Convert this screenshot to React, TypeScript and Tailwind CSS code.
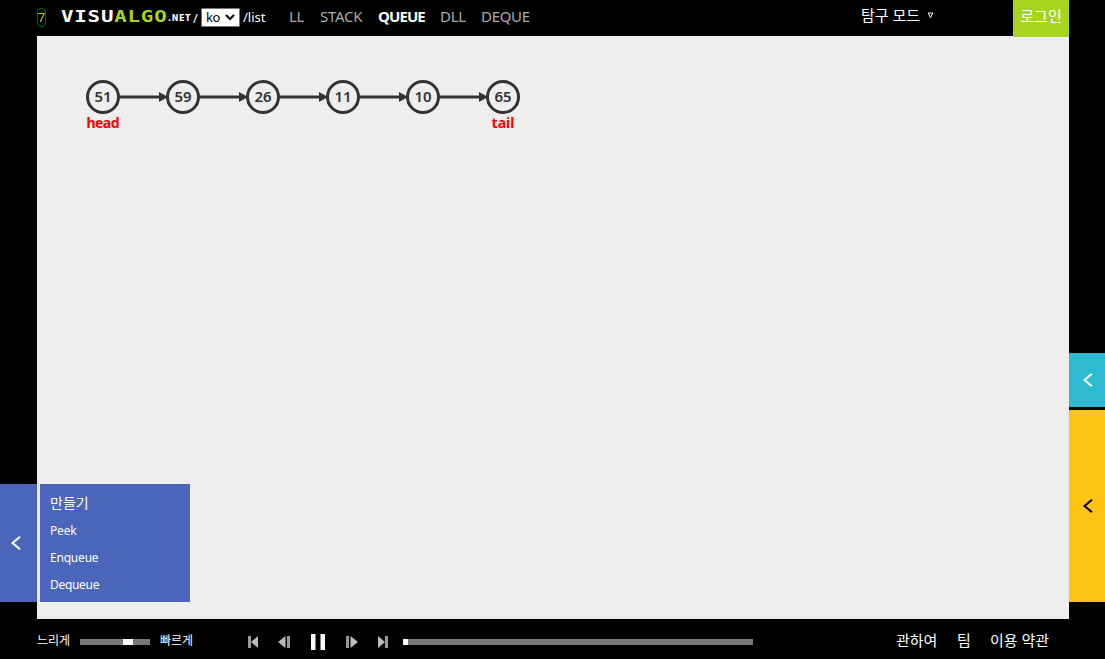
import React from "react";

const values = [51, 59, 26, 11, 10, 65];

const tabs = [
  { name: "LL", cls: "w-[31px] text-[#aaa] tracking-[-0.3px]" },
  { name: "STACK", cls: "w-[58px] text-[#aaa] tracking-[-0.25px]" },
  { name: "QUEUE", cls: "w-[62px] font-bold text-white tracking-[-0.9px]" },
  { name: "DLL", cls: "w-[41px] text-[#aaa] tracking-[-0.3px]" },
  { name: "DEQUE", cls: "w-[60px] text-[#aaa] tracking-[-0.3px]" },
];

function Chevron() {
  return (
    <svg width="10" height="14" viewBox="0 0 10 14" fill="none">
      <path d="M9 0.800 L1.500 7 L9 13.200" stroke="currentColor" strokeWidth="2" />
    </svg>
  );
}

function Header() {
  return (
    <header className="flex h-9 shrink-0 items-start bg-black pl-[37px] text-white">
      <span className="mt-2 flex h-[19px] w-[9px] items-center justify-center rounded-[4px] border border-[#007000] text-[13px] text-[#a7d41e]">
        7
      </span>
      <div className="ml-[15px] flex h-[33px] w-[107px] items-center whitespace-nowrap">
        <span className="origin-left scale-x-[1.3] font-['DejaVu_Sans_Mono'] text-[16px] font-bold tracking-[0.6px]">
          VISU<span className="text-[#a7d41e]">ALGO</span>
        </span>
      </div>
      <span className="mt-[11px] w-[25px] font-['DejaVu_Sans'] text-[8px] leading-[16px] font-bold tracking-[0.6px]">.NET</span>
      <span className="mt-[9px] w-[8px] text-[13px] leading-[18px]">/</span>
      <div className="mt-2 flex h-[19px] w-[39px] items-center rounded-[1px] border border-[#777] bg-white pl-1 text-[13px] text-black">
        <span className="w-[19px] tracking-[-0.4px]">ko</span>
        <svg width="10" height="7" viewBox="0 0 10 7" fill="none">
          <path d="M1 1 L5 5 L9 1" stroke="currentColor" strokeWidth="2" />
        </svg>
      </div>
      <span className="mt-2 ml-[3px] w-[45px] text-[13px] leading-[18px]">/list</span>
      <nav className="mt-[5px] ml-px flex text-[15px] leading-[22px]">
        {tabs.map((t) => (
          <span key={t.name} className={t.cls}>{t.name}</span>
        ))}
      </nav>
      <div className="mt-1 ml-auto flex w-[152px] items-center text-[15px] leading-[22px]">
        <span className="w-[66px] whitespace-nowrap">탐구 모드</span>
        <svg width="7" height="7" viewBox="0 0 7 7" fill="none">
          <path d="M1.200 1 H5.800 L3.500 5.600 Z" stroke="currentColor" />
        </svg>
      </div>
      <button className="relative z-10 mr-9 h-[37px] w-14 shrink-0 bg-[#a7d41e] pb-1 text-[15px] whitespace-nowrap">로그인</button>
    </header>
  );
}

function QueueDrawing() {
  return (
    <svg width="1032" height="120" className="block font-['Noto_Sans']">
      {values.slice(1).map((v, i) => (
        <g key={v}>
          <path d={`M${82 + i * 80} 61 H${122 + i * 80}`} stroke="#333" strokeWidth="3" />
          <path d={`M${122 + i * 80} 56 L${131 + i * 80} 61 L${122 + i * 80} 66 Z`} fill="#333" />
        </g>
      ))}
      {values.map((v, i) => (
        <g key={v}>
          <circle cx={66 + i * 80} cy="61" r="15.5" fill="#eee" stroke="#333" strokeWidth="3" />
          <text x={66 + i * 80} y="66" textAnchor="middle" fontSize="15" fontWeight="600" fill="#333">{v}</text>
        </g>
      ))}
      <g fill="red" fontSize="14" fontWeight="700" textAnchor="middle">
        <text x="66" y="92" textLength="33">head</text>
        <text x="466" y="92" textLength="23">tail</text>
      </g>
    </svg>
  );
}

function Footer() {
  return (
    <footer className="flex h-10 shrink-0 items-center bg-black pt-1.5 pr-[36px] pl-[37px] text-white">
      <span className="w-[43px] pb-0.5 text-[12px] whitespace-nowrap">느리게</span>
      <div className="flex h-1.5 w-[70px] bg-[#777] pl-[43px]">
        <div className="h-1.5 w-2.5 bg-white" />
      </div>
      <span className="ml-[10px] w-[87px] pb-0.5 text-[12px] whitespace-nowrap">빠르게</span>
      <svg width="144" height="18" viewBox="247 633 144 18" fill="#bbb">
        <path d="M248 636h3v12h-3z" fill="#999" />
        <path d="M258 636v12l-7-6z" />
        <path d="M285.500 636v12l-7.500-6z" />
        <path d="M287 636h3v12h-3z" fill="#999" />
        <path d="M311 634h4.500v16h-4.500z M320.500 634h4.500v16h-4.500z" fill="#fff" />
        <path d="M346 636h3v12h-3z" fill="#999" />
        <path d="M350.500 636v12l7.500-6z" />
        <path d="M378 636v12l7-6z" />
        <path d="M385 636h3v12h-3z" fill="#999" />
      </svg>
      <div className="ml-3 h-1.5 w-[350px] bg-[#777]">
        <div className="h-1.5 w-[5px] bg-white" />
      </div>
      <div className="ml-auto flex pb-1 text-[15px] whitespace-nowrap">
        <span className="w-[61px]">관하여</span>
        <span className="w-[33px]">팀</span>
        <span className="w-[79px]">이용 약관</span>
      </div>
    </footer>
  );
}

export default function App() {
  return (
    <div className="flex h-[659px] w-[1105px] flex-col overflow-hidden bg-black font-['Noto_Sans','Noto_Sans_CJK_KR',sans-serif]">
      <Header />
      <div className="flex h-[583px] shrink-0">
        <aside className="flex w-[37px] shrink-0 flex-col justify-end pb-[17px]">
          <button className="flex h-[118px] items-center bg-[#4b65ba] pl-[11px] text-white">
            <Chevron />
          </button>
        </aside>
        <main className="flex w-[1032px] flex-col justify-between bg-[#eee] pb-[17px]">
          <QueueDrawing />
          <ul className="ml-[3px] h-[118px] w-[150px] bg-[#4b65ba] px-[10px] pt-1.5 text-[12px] leading-[27px] text-white">
            <li className="-mt-px mb-px text-[14px]">만들기</li>
            <li className="tracking-[-0.2px]">Peek</li>
            <li className="tracking-[-0.2px]">Enqueue</li>
            <li className="tracking-[-0.3px]">Dequeue</li>
          </ul>
        </main>
        <aside className="flex w-9 shrink-0 flex-col justify-end gap-[3px] pb-[17px]">
          <button className="flex h-[54px] items-center bg-[#2ebbd1] pl-[14px] text-white">
            <Chevron />
          </button>
          <button className="flex h-[192px] items-center bg-[#ffc515] pl-[14px] text-black">
            <Chevron />
          </button>
        </aside>
      </div>
      <Footer />
    </div>
  );
}
